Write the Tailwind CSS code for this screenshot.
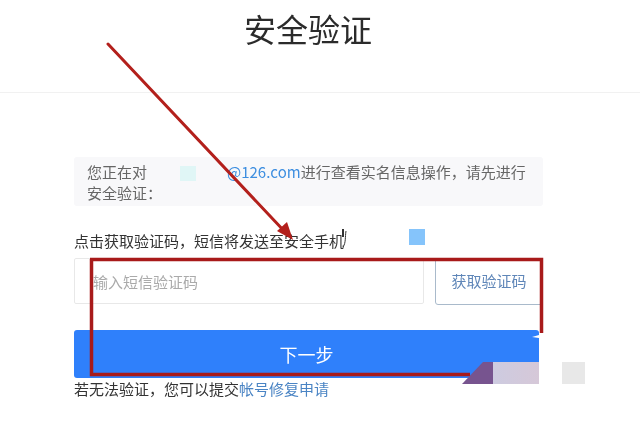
<!DOCTYPE html>
<html lang="zh-CN">
<head>
  <meta charset="UTF-8" />
  <title>安全验证</title>
  <script src="https://cdn.jsdelivr.net/npm/@tailwindcss/browser@4"></script>
</head>
<body class="bg-white font-['Noto_Sans_CJK_SC','Noto_Sans',sans-serif] text-[#333]">
  <div class="relative w-[640px] h-[422px] overflow-hidden blur-[0.35px]">

    <!-- 标题 -->
    <div class="h-[93px] border-b border-[#f1f1f1] pt-[6px] text-center">
      <h1 class="text-[32px] leading-[44px] font-normal text-[#2b2b2b] -translate-x-[12px]">安全验证</h1>
    </div>

    <div class="pl-[74px] pr-[97px] pt-[64px]">
      <!-- 提示 -->
      <div class="h-[49px] bg-[#f8f8fa] rounded-[3px] pl-[13px] pr-[16px] pt-[4px] text-[15px] leading-[21px] text-[#666]">
        您正在对<span class="inline-block w-[80px]"></span><span class="text-[#3d8ee0]">@126.com</span>进行查看实名信息操作，请先进行<br />安全验证：
      </div>

      <p class="mt-[24px] text-[15px] leading-[22px] text-[#333]">点击获取验证码，短信将发送至安全手机</p>

      <!-- 验证码 -->
      <div class="mt-[6px] flex gap-[11px]">
        <input class="w-[350px] h-[46px] border border-[#e8e8e8] rounded-[2px] pl-[18px] text-[15px] outline-none placeholder:text-[#aaa]" placeholder="输入短信验证码" />
        <button class="w-[108px] h-[47px] border border-[#a9bacb] rounded-[3px] text-[15px] text-[#5f86b8] bg-white">获取验证码</button>
      </div>

      <button class="mt-[25px] w-[465px] h-[48px] bg-[#2f80fb] rounded-[3px] text-white text-[18px]">下一步</button>

      <p class="text-[15px] leading-[22px] text-[#333]">若无法验证，您可以提交<a href="#" class="text-[#4a84c4]">帐号修复申请</a></p>
    </div>

    <!-- 打码色块 -->
    <div class="absolute left-[180px] top-[166px] w-[16px] h-[15px] bg-[#e0f6f6]"></div>
    <div class="absolute left-[409px] top-[229px] w-[16px] h-[16px] bg-[#85c4fb]"></div>
    <div class="absolute left-[562px] top-[362px] w-[23px] h-[22px] bg-[#e8e8e8]"></div>
    <div class="absolute left-[493px] top-[362px] w-[46px] h-[22px] bg-gradient-to-r from-[#cdcbe0] to-[#d6c8d8]"></div>

    <!-- 标注 -->
    <svg class="absolute left-0 top-0" width="640" height="422" viewBox="0 0 640 422" fill="none">
      <line x1="108" y1="44" x2="286" y2="233" stroke="#b3201c" stroke-width="3" stroke-linecap="round" />
      <polygon points="293,240 277,231 287,222" fill="#b3201c" />
      <path d="M90 259.500H541.500V333M91.500 259V374.500H470" stroke="#a81a1a" stroke-width="3.500" />
      <polygon points="462,384 483,362 493,362 493,384" fill="#77548f" />
      <polygon points="532,337 539,335 539,338" fill="#ffffff" />
      <path d="M346 231C345 237 346 243 343 247" stroke="#333" stroke-width="1" />
      <rect x="342" y="229" width="2" height="8" fill="#333" />
    </svg>
  </div>
</body>
</html>
